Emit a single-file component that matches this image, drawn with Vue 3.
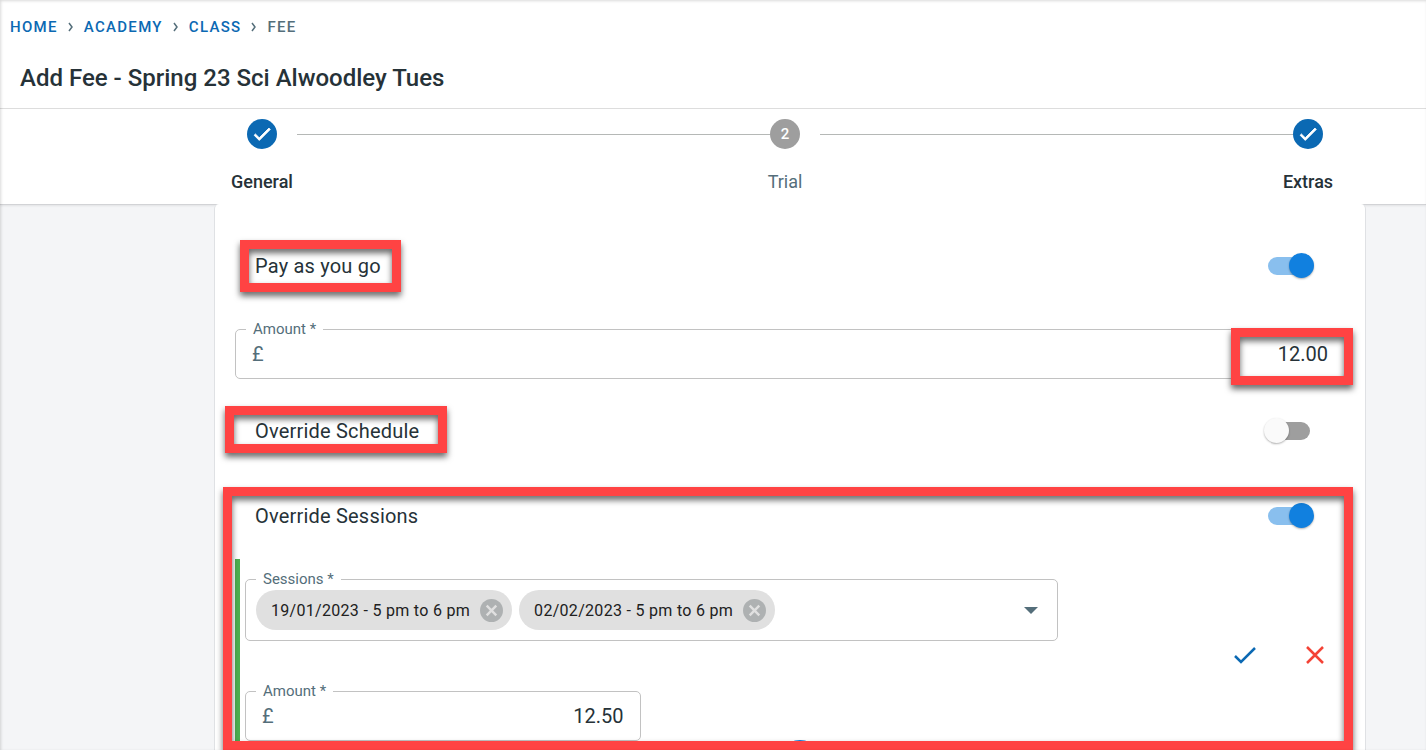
<script setup>
import { ref } from 'vue'

const crumbs = ['Home', 'Academy', 'Class']
const payAsYouGo = ref(true)
const overrideSchedule = ref(false)
const overrideSessions = ref(true)
const amount = ref('12.00')
const sessionAmount = ref('12.50')
const sessions = ref(['19/01/2023 - 5 pm to 6 pm', '02/02/2023 - 5 pm to 6 pm'])

function removeSession(item) {
  sessions.value = sessions.value.filter((s) => s !== item)
}
</script>

<template>
  <div class="page">
    <header class="header">
      <nav class="crumbs" aria-label="Breadcrumb">
        <template v-for="c in crumbs" :key="c">
          <a href="#">{{ c }}</a>
          <svg class="chevron" viewBox="0 0 6 10" aria-hidden="true"><path d="M1 1 4 5 1 9" /></svg>
        </template>
        <span>Fee</span>
      </nav>
      <h1>Add Fee - Spring 23 Sci Alwoodley Tues</h1>
    </header>

    <ol class="stepper">
      <li class="step done">
        <span class="dot"><svg viewBox="0 0 24 24" aria-hidden="true"><path d="M9 16.170 4.830 12l-1.420 1.410L9 19 21 7l-1.410-1.410z" /></svg></span>
        <span class="name">General</span>
      </li>
      <li class="line" aria-hidden="true"></li>
      <li class="step">
        <span class="dot">2</span>
        <span class="name">Trial</span>
      </li>
      <li class="line" aria-hidden="true"></li>
      <li class="step done">
        <span class="dot"><svg viewBox="0 0 24 24" aria-hidden="true"><path d="M9 16.170 4.830 12l-1.420 1.410L9 19 21 7l-1.410-1.410z" /></svg></span>
        <span class="name">Extras</span>
      </li>
    </ol>

    <main class="card">
      <div class="row">
        <label for="payg">Pay as you go</label>
        <input id="payg" v-model="payAsYouGo" class="switch" type="checkbox" role="switch" />
        <span class="mark mark-payg"></span>
      </div>

      <div class="field main-amount">
        <label class="caption" for="amount">Amount *</label>
        <span class="currency">£</span>
        <input id="amount" v-model="amount" class="value" type="text" />
        <span class="mark mark-amount"></span>
      </div>

      <div class="row schedule">
        <label for="schedule">Override Schedule</label>
        <input id="schedule" v-model="overrideSchedule" class="switch" type="checkbox" role="switch" />
        <span class="mark mark-schedule"></span>
      </div>

      <section class="sessions">
        <div class="row">
          <label for="sessions">Override Sessions</label>
          <input id="sessions" v-model="overrideSessions" class="switch" type="checkbox" role="switch" />
        </div>

        <div class="panel">
          <div class="fields">
            <div class="field picker">
              <label class="caption" for="session-list">Sessions *</label>
              <span v-for="s in sessions" :key="s" class="chip">
                {{ s }}
                <button type="button" :aria-label="'Remove ' + s" @click="removeSession(s)">
                  <svg viewBox="0 0 24 24"><circle cx="12" cy="12" r="12" /><path d="m7 7 10 10M17 7 7 17" /></svg>
                </button>
              </span>
              <select id="session-list"><option value=""></option></select>
              <svg class="arrow" viewBox="0 0 14 7" aria-hidden="true"><path d="M0 0h14L7 7z" /></svg>
            </div>
            <div class="field session-amount">
              <label class="caption" for="session-amount">Amount *</label>
              <span class="currency">£</span>
              <input id="session-amount" v-model="sessionAmount" class="value" type="text" />
            </div>
          </div>
          <div class="actions">
            <button type="button" class="save" aria-label="Save">
              <svg viewBox="0 0 24 24"><path d="m2 13 6 6L22 5" /></svg>
            </button>
            <button type="button" class="cancel" aria-label="Cancel">
              <svg viewBox="0 0 24 24"><path d="m4 4 16 16M20 4 4 20" /></svg>
            </button>
          </div>
          <button type="button" class="add" aria-label="Add session"></button>
        </div>
        <span class="mark mark-sessions"></span>
      </section>
    </main>
  </div>
</template>

<style>
body {
  margin: 0;
  overflow: hidden;
}
</style>

<style scoped>
.page {
  height: 100vh;
  overflow: hidden;
  position: relative;
  background: #f4f5f7;
  color: #263238;
  font-family: Roboto, "Liberation Sans", sans-serif;
}
.page::after {
  content: "";
  position: absolute;
  inset: 0;
  pointer-events: none;
  box-shadow: inset 1px 1px 3px rgba(0, 0, 0, 0.15);
}
.header {
  display: flex;
  flex-direction: column;
  height: 108px;
  background: #fff;
  border-bottom: 1px solid #dedede;
}
.crumbs {
  display: flex;
  align-items: center;
  padding: 17px 10px 0;
  font-size: 15px;
  line-height: 20px;
  font-weight: 500;
  letter-spacing: 1.3px;
  text-transform: uppercase;
  color: #546e7a;
}
.crumbs a {
  color: #0b69b3;
  text-decoration: none;
}
.chevron {
  width: 6px;
  height: 10px;
  margin: 0 10px;
  fill: none;
  stroke: #546e7a;
  stroke-width: 1.5;
}
h1 {
  margin: 25px 20px 0;
  font-size: 24px;
  line-height: 32px;
  font-weight: 500;
}
.stepper {
  display: flex;
  margin: 0;
  padding: 10px 103px 10px 247px;
  list-style: none;
  background: #fff;
  border-bottom: 1px solid #d2d3d6;
  box-shadow: 0 1px 2px rgba(0, 0, 0, 0.08);
}
.step {
  display: flex;
  flex-direction: column;
  align-items: center;
  gap: 21px;
  width: 30px;
  height: 75px;
  white-space: nowrap;
  color: #546e7a;
}
.dot {
  display: flex;
  align-items: center;
  justify-content: center;
  flex: none;
  width: 30px;
  height: 30px;
  border-radius: 50%;
  background: #9e9e9e;
  color: #fff;
  font-size: 15px;
  font-weight: 500;
}
.dot svg {
  width: 22px;
  height: 22px;
  fill: #fff;
  stroke: #fff;
}
.done .dot {
  background: #0b69b3;
}
.name {
  font-size: 18px;
  line-height: 24px;
}
.done .name {
  color: #263238;
  font-weight: 500;
}
.line {
  flex: 1;
  height: 1px;
  margin: 15px 0 0 20px;
  background: #b5b8b6;
}
.card {
  position: relative;
  margin: -1px 60px 0 214px;
  padding: 32px 20px 40px;
  background: #fff;
  border: solid #dfe1e4;
  border-width: 0 1px;
  border-radius: 5px 5px 0 0;
}
.row {
  position: relative;
  display: flex;
  align-items: center;
  justify-content: space-between;
  height: 60px;
  padding: 0 31px 0 20px;
  font-size: 20px;
  letter-spacing: 0.2px;
}
.schedule {
  margin-top: 22px;
}
.sessions {
  position: relative;
  margin-top: 25px;
}
.switch {
  appearance: none;
  position: relative;
  width: 50px;
  height: 26px;
  margin: 0;
}
.switch::before {
  content: "";
  position: absolute;
  inset: 4px;
  border-radius: 9px;
  background: #9e9e9e;
}
.switch::after {
  content: "";
  position: absolute;
  left: 0;
  top: 0;
  width: 25px;
  height: 25px;
  border-radius: 50%;
  background: #fafafa;
  box-shadow: 0 1px 2px rgba(0, 0, 0, 0.3);
}
.switch:checked::before {
  background: #89bfee;
}
.switch:checked::after {
  left: 25px;
  background: #1180df;
}
.field {
  position: relative;
  display: flex;
  align-items: center;
  box-sizing: border-box;
  height: 50px;
  padding: 0 16px;
  border: 1px solid #c2c2c2;
  border-radius: 5px;
}
.main-amount {
  margin-top: 33px;
}
.caption {
  position: absolute;
  left: 10px;
  top: -11px;
  padding: 0 7px;
  background: #fff;
  color: #546e7a;
  font-size: 15px;
  line-height: 20px;
}
.currency {
  color: #546e7a;
  font-size: 20px;
}
.value {
  flex: 1;
  min-width: 0;
  padding: 0;
  border: 0;
  outline: 0;
  background: none;
  color: #263238;
  font: inherit;
  font-size: 20px;
  line-height: 24px;
  text-align: right;
}
.panel {
  position: relative;
  display: flex;
  margin-top: 13px;
  padding: 20px 18px 10px 5px;
  border-left: 5px solid #4caf50;
}
.fields {
  flex: 1;
}
.picker {
  height: 62px;
  padding: 0 19px 0 10px;
  gap: 7px;
}
.session-amount {
  width: calc(50% - 11px);
  margin-top: 50px;
}
.chip {
  display: flex;
  align-items: center;
  gap: 10px;
  height: 40px;
  box-sizing: border-box;
  padding: 0 9px 0 15px;
  border-radius: 20px;
  background: #e0e0e0;
  color: #212121;
  font-size: 16px;
  letter-spacing: 0.3px;
  white-space: nowrap;
}
button {
  padding: 0;
  border: 0;
  background: none;
}
.chip svg {
  display: block;
  width: 23px;
  height: 23px;
  fill: #aeb1b2;
  stroke: #e0e0e0;
}
.chip path {
  stroke-width: 2.5;
}
.chip circle {
  stroke: none;
}
select {
  appearance: none;
  flex: 1;
  min-width: 0;
  height: 40px;
  border: 0;
  background: none;
}
.arrow {
  width: 14px;
  height: 7px;
  fill: #546e7a;
}
.actions {
  display: flex;
  align-items: center;
  gap: 46px;
  margin: 0 0 10px 175px;
}
.actions svg {
  display: block;
  width: 24px;
  height: 24px;
  fill: none;
  stroke-width: 2.5;
}
.save {
  stroke: #0b69b3;
}
.cancel {
  stroke: #f44336;
}
.add {
  position: absolute;
  left: calc(50% - 18px);
  bottom: -39px;
  width: 50px;
  height: 50px;
  border-radius: 50%;
  background: #1180df;
}
/* Highlight frames drawn over the form */
.mark {
  position: absolute;
  box-sizing: border-box;
  border: 9px solid #ff4343;
  filter: drop-shadow(0 4px 3px rgba(0, 0, 0, 0.6));
  pointer-events: none;
}
.mark-payg {
  left: 5px;
  top: 4px;
  width: 161px;
  height: 52px;
}
.mark-amount {
  right: -9px;
  top: -2px;
  width: 122px;
  height: 57px;
}
.mark-schedule {
  left: -10px;
  top: 5px;
  width: 222px;
  height: 47px;
}
.mark-sessions {
  inset: 1px -8px 1px -12px;
}
</style>
